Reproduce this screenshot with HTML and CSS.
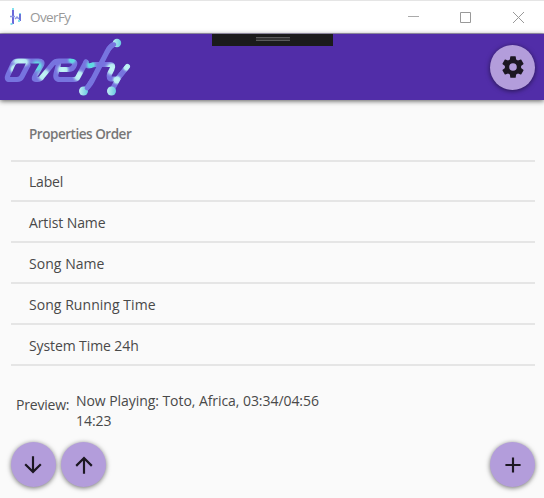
FILE: index.html
```html
<!DOCTYPE html>
<html lang="en">
<head>
<meta charset="utf-8">
<title>OverFy</title>
<link rel="stylesheet" href="styles.css">
</head>
<body>
<div class="window">
  <div class="titlebar">
    <svg class="app-icon" width="14" height="20" viewBox="0 0 14 20" fill="none" stroke-width="2">
      <path d="M4 2v15" stroke="#6b69da"/><path d="M1 9.500h5M6 12l2-2 2 2" stroke="#8d96e3" stroke-width="1.500"/><path d="M11 7v7" stroke="#6b74da"/>
      <path d="M4 1v2M2.500 16v2M11 6v1M10 13v2" stroke="#83e1ee"/>
    </svg>
    <span class="title">OverFy</span>
    <svg class="controls" width="120" height="14" viewBox="0 0 120 14" fill="none" stroke="#999">
      <path d="M1 6.500h11" stroke="#aaa"/><path d="M53.500 2.500h10v10h-10z"/><path d="M106 2l11 11M117 2l-11 11"/>
    </svg>
  </div>
  <header class="appbar">
    <svg class="logo" width="136" height="66" viewBox="0 34 136 66" fill="none" stroke-linecap="round" stroke-linejoin="round">
      <defs>
        <radialGradient id="ice"><stop offset="0" stop-color="#c4f6f5"/><stop offset=".5" stop-color="#b5e9f2"/><stop offset="1" stop-color="#7774df" stop-opacity="0"/></radialGradient>
        <radialGradient id="teal"><stop offset="0" stop-color="#56dde0"/><stop offset=".4" stop-color="#67d6e3"/><stop offset="1" stop-color="#7774df" stop-opacity="0"/></radialGradient>
        <linearGradient id="dot"><stop offset="0" stop-color="#c0eef3"/><stop offset="1" stop-color="#68c9e1"/></linearGradient>
        <mask id="letters" maskUnits="userSpaceOnUse" x="0" y="34" width="136" height="66">
          <g stroke="#fff" stroke-width="5.100">
            <path d="M28 65L22 76.500Q20.500 79.500 17 79.500H9.500Q6 79.500 8 75L13 64Q14.500 61 18 61H38.500Q43.500 61 41.500 65L35 76Q33 79.500 36 79.500H37.500Q40.500 79.500 42 77L53 63.500Q55 61 59 61H70Q76 61 74.500 65Q73 69.500 69 69.500H61M59 62L56.500 72Q54 79.500 60 79.500H74Q77 79.500 78 77L86 62"/>
            <path d="M86 62Q86 67 91 65.500Q93 64.500 96 64.500H110Q114 64.500 112 69L109.500 74Q108 79 112 79H116Q118 79 119 77L127.500 66.500"/>
            <path d="M127 67L119 77L112 90"/>
            <path d="M117 43Q110 45 107 52L92 81Q89 87 83 91"/>
          </g>
        </mask>
      </defs>
      <g mask="url(#letters)">
        <path d="M0 34h136v66H0z" fill="#7774df"/>
        <g fill="url(#ice)">
          <ellipse cx="21" cy="62" rx="12" ry="7"/><circle cx="15" cy="69" r="7"/><circle cx="44" cy="75" r="9"/><circle cx="63" cy="70" r="8"/>
          <circle cx="79" cy="76" r="8"/><circle cx="112" cy="69" r="9"/><circle cx="117" cy="80" r="6"/><circle cx="127" cy="67" r="6"/>
        </g>
        <g fill="url(#teal)"><circle cx="37" cy="66" r="9"/><circle cx="72" cy="60" r="6"/><circle cx="91" cy="65" r="7"/></g>
      </g>
      <circle cx="117" cy="43" r="4.200" fill="url(#dot)"/><circle cx="83.500" cy="91" r="4.500" fill="url(#dot)"/><circle cx="111.500" cy="91" r="4.500" fill="url(#dot)"/>
      <path d="M114 44.500Q110 46 107 52M87 88L92 80" stroke="#7774df" stroke-width="4.600"/>
    </svg>
    <div class="debug-handle"><i></i></div>
    <button class="fab" aria-label="Settings"><svg width="26" height="26" viewBox="0 0 24 24"><path d="M12 15.500A3.500 3.500 0 1 1 12 8.500a3.500 3.500 0 0 1 0 7m7.430-2.530c.04-.32.070-.64.070-.97s-.03-.66-.07-1l2.110-1.630c.19-.15.24-.42.120-.64l-2-3.460c-.12-.22-.39-.31-.61-.22l-2.490 1c-.52-.39-1.060-.73-1.690-.98l-.37-2.650A.506.506 0 0 0 14 2h-4c-.25 0-.46.180-.5.420l-.37 2.650c-.63.250-1.170.59-1.690.98l-2.490-1c-.22-.09-.49 0-.61.220l-2 3.460c-.13.220-.07.490.12.640L4.570 11c-.04.340-.07.670-.07 1s.03.650.07.970l-2.110 1.660c-.19.150-.25.420-.12.640l2 3.460c.12.220.39.300.61.220l2.490-1.010c.52.400 1.060.740 1.690.99l.37 2.650c.04.240.25.420.5.420h4c.25 0 .46-.18.500-.42l.37-2.650c.63-.26 1.170-.59 1.690-.99l2.490 1.010c.22.080.49 0 .61-.22l2-3.460c.12-.22.070-.49-.12-.64z"/></svg></button>
  </header>
  <main>
    <ul class="properties">
      <li class="heading"><span>Properties Order</span></li>
      <li class="short"><span>Label</span></li>
      <li><span>Artist Name</span></li>
      <li class="wide"><span>Song Name</span></li>
      <li class="wide"><span>Song Running Time</span></li>
      <li><span>System Time 24h</span></li>
    </ul>
    <div class="preview"><span class="preview-label">Preview:</span><p>Now Playing: Toto, Africa, 03:34/04:56<br>14:23</p></div>
  </main>
  <footer>
    <button class="fab" aria-label="Move down"><svg width="26" height="26" viewBox="0 0 24 24"><path d="M11 4h2v12l5.500-5.500 1.420 1.420L12 19.840l-7.920-7.920L5.500 10.500 11 16z"/></svg></button>
    <button class="fab" aria-label="Move up"><svg width="26" height="26" viewBox="0 0 24 24"><path d="M13 20h-2V8l-5.500 5.500-1.420-1.420L12 4.160l7.920 7.920-1.420 1.420L13 8z"/></svg></button>
    <button class="fab add" aria-label="Add"><svg width="26" height="26" viewBox="0 0 24 24"><path d="M19 13h-6v6h-2v-6H5v-2h6V5h2v6h6z"/></svg></button>
  </footer>
</div>
</body>
</html>
```
FILE: styles.css
```css
* { box-sizing: border-box; }
body { margin: 0; overflow: hidden; background: #fafafa; color: #494949; font: 14px/20px "Open Sans", "Noto Sans", sans-serif; }
.window { width: 544px; height: 498px; display: flex; flex-direction: column; }
.titlebar { height: 34px; flex: none; display: flex; align-items: center; background: #fff; border-top: 1px solid #e5e5e5; border-bottom: 1px solid #aaa3bd; padding: 0 17px 0 9px; }
.title { margin-left: 7px; color: #999; font-size: 13.5px; letter-spacing: -.6px; }
.controls { margin-left: auto; }
.appbar { position: relative; height: 66px; flex: none; display: flex; align-items: center; justify-content: space-between; padding-right: 9px; background: #512da8; box-shadow: 0 1px 5px rgba(0,0,0,.65); }
.logo { display: block; }
.debug-handle { position: absolute; left: 212px; top: 0; width: 121px; height: 12px; background: #1b1b1b; }
.debug-handle i { display: block; width: 34px; height: 4px; margin: 3px auto 0 44px; border: solid #5a5a5a; border-width: 1px 0; background: #333; }
.fab { width: 45px; height: 45px; flex: none; display: grid; place-items: center; border: 0; border-radius: 50%; padding: 0; background: #b39ddb; fill: #1c1722; box-shadow: 0 1px 5px rgba(0,0,0,.55); }
main { flex: 1; padding: 10px 9px 0 11px; }
.properties { list-style: none; margin: 0; padding: 0; }
.properties li { height: 41px; display: flex; align-items: center; padding: 3px 0 0 18px; border-bottom: 2px solid #e5e5e5; letter-spacing: -.1px; }
.properties .heading { height: 52px; padding: 0 0 2px 18px; color: #777; font-weight: 600; font-size: 13.5px; letter-spacing: -.47px; }
.properties .short { height: 40px; padding-top: 1px; letter-spacing: -.2px; }
.properties .wide { letter-spacing: .05px; }
.preview { display: flex; padding: 25px 0 0 5px; }
.preview-label { width: 60px; padding-top: 4px; letter-spacing: -.2px; }
.preview p { margin: 0; letter-spacing: -.06px; }
footer { height: 56px; flex: none; display: flex; gap: 5.5px; padding: 0 9px 0 10.5px; }
.add { margin-left: auto; }
```
